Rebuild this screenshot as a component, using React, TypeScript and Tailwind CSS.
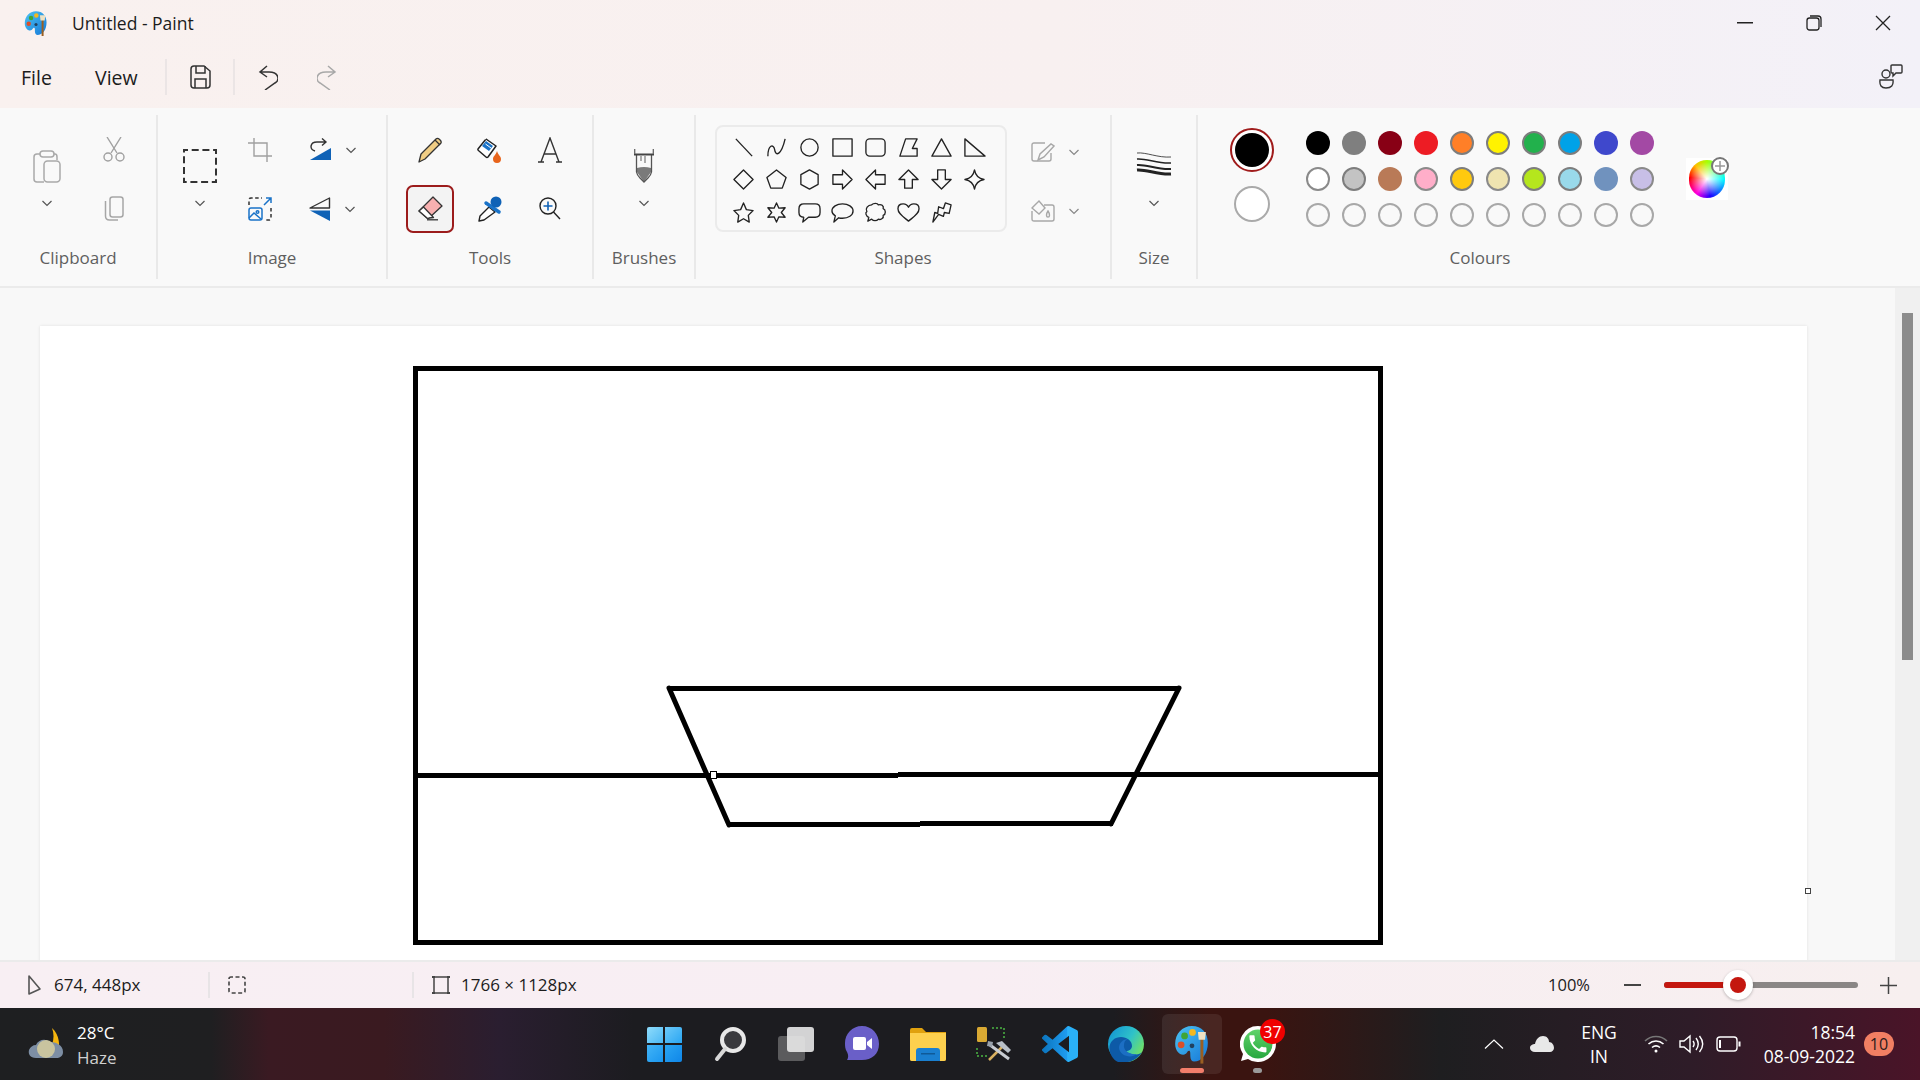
import React from "react";

const Chevron = ({ color = "#555" }: { color?: string }) => (
  <svg width="12" height="12" viewBox="0 0 12 12" fill="none" stroke={color} strokeWidth="1.200">
    <path d="M1.500 4 L6 8.500 L10.500 4" />
  </svg>
);

const PaintLogo = ({ size }: { size: number }) => (
  <svg width={size} height={size * 1.1} viewBox="0 0 36 40">
    <defs>
      <linearGradient id="palette" x1="0" y1="0" x2="1" y2="1">
        <stop offset="0" stopColor="#4cc3f2" />
        <stop offset="1" stopColor="#1578d8" />
      </linearGradient>
    </defs>
    <path d="M18 2C8 2 1 10 1 20c0 7 4 11 8 11 4 0 4-4 6-4 3 0-1 10 5 11 8 0 14-8 14-19C34 9 28 2 18 2Z" fill="url(#palette)" />
    <circle cx="7" cy="21" r="3.400" fill="#d9502b" />
    <circle cx="10.500" cy="12" r="3.400" fill="#3fa535" />
    <circle cx="18.500" cy="8.500" r="3.400" fill="#f4b81f" />
    <circle cx="18" cy="22" r="2.400" fill="#21415f" />
    <rect x="26.500" y="15" width="3" height="25" fill="#9a5f22" />
    <path d="M24 8h8l-.800 8h-6.400Z" fill="#eee2c4" />
  </svg>
);

const IconBox = ({ className, children }: { className?: string; children: React.ReactNode }) => (
  <div className={`flex items-center justify-center ${className ?? ""}`}>{children}</div>
);

const shapes: React.ReactNode[] = [
  <path d="M4 3 L21 21" />,
  <path d="M3 21C3 9 9 8 10 14c1 8 7 6 11-11" />,
  <circle cx="12" cy="12" r="9" />,
  <rect x="2" y="3" width="20" height="18" />,
  <rect x="2" y="3" width="20" height="18" rx="4" />,
  <path d="M9 3H21L16 13H21V21H3Z" />,
  <path d="M12 3 L22 21H2Z" />,
  <path d="M2 3 L23 21H2Z" />,
  <path d="M12 2 L22 12 L12 22 L2 12Z" />,
  <path d="M12 2 L22 10 L18 21H6L2 10Z" />,
  <path d="M12 2 L21 7V17L12 22 L3 17V7Z" />,
  <path d="M2 7H12V2L22 12 L12 22V17H2Z" />,
  <path d="M22 7H12V2L2 12 L12 22V17H22Z" />,
  <path d="M12 2 L22 12H16V21H8V12H2Z" />,
  <path d="M8 2H16V12H22L12 22 L2 12H8Z" />,
  <path d="M12 2C13 8 16 11 22 12 16 13 13 16 12 22 11 16 8 13 2 12 8 11 11 8 12 2Z" />,
  <path d="M12 2 L15 9 L22 10 L17 15 L18 22 L12 18.500 L6 22 L7 15 L2 10 L9 9Z" />,
  <path d="M12 2 L14.500 7.500 L21 7 L17 12 L21 17 L14.500 16.500 L12 22 L9.500 16.500 L3 17 L7 12 L3 7 L9.500 7.500Z" />,
  <path d="M6 3H18C21 3 23 5 23 8V12C23 15 21 17 18 17H11L5 22 L6 17C3 17 1 15 1 12V8C1 5 3 3 6 3Z" />,
  <path d="M12 3C18 3 23 6 23 10.500S18 18 12 18C10.500 18 9.500 18 8 17.500L3 22 L4.500 15.500C2 14 1 12.500 1 10.500 1 6 6 3 12 3Z" />,
  <path d="M8 4C10 2 14 2 15 4 18 3 21 5 20 8 23 9 23 14 20 15 21 18 17 20 15 19 13 21 10 21 8 19L4 21 5 17C2 16 1 12 3 11 1 8 4 4 8 4Z" />,
  <path d="M12 21C6 16 1 13 1 8 1 4 4 3 6.500 3 9 3 11 4.500 12 6.500 13 4.500 15 3 17.500 3 20 3 23 4 23 8 23 13 18 16 12 21Z" />,
  <path d="M9 6 L14 8 L16 2 L22 4 L20 13 L15 12 L14 16 L9 14 L3 22 L5 12 L8 13Z" />,
];

const swatches = [
  "bg-black",
  "bg-[#7f7f7f]",
  "bg-[#880015]",
  "bg-[#ed1c24]",
  "bg-[#ff7f27] border-2 border-[#7d7d7d]",
  "bg-[#fff200] border-2 border-[#7d7d7d]",
  "bg-[#22b14c] border-2 border-[#7d7d7d]",
  "bg-[#00a2e8] border-2 border-[#7d7d7d]",
  "bg-[#3f48cc]",
  "bg-[#a349a4]",
  "bg-white border-2 border-[#8a8a8a]",
  "bg-[#c3c3c3] border-2 border-[#7d7d7d]",
  "bg-[#b97a57]",
  "bg-[#ffaec9] border-2 border-[#8a8a8a]",
  "bg-[#ffc90e] border-2 border-[#7d7d7d]",
  "bg-[#efe4b0] border-2 border-[#8a8a8a]",
  "bg-[#b5e61d] border-2 border-[#7d7d7d]",
  "bg-[#99d9ea] border-2 border-[#7d7d7d]",
  "bg-[#7092be]",
  "bg-[#c8bfe7] border-2 border-[#8a8a8a]",
  ...Array(10).fill("border-2 border-[#a8a8a8]"),
];

const Group = ({
  label,
  className,
  children,
}: {
  label: string;
  className: string;
  children: React.ReactNode;
}) => (
  <div className={`flex flex-col shrink-0 border-r-2 border-[#e9e9e9] ${className}`}>
    <div className="h-[130px]">{children}</div>
    <div className="h-[26px] flex items-center justify-center text-[17px] text-[#5f5f5f]">{label}</div>
  </div>
);

const BigButton = ({ children }: { children: React.ReactNode }) => (
  <div className="row-span-2 flex flex-col items-center pt-[26px]">
    <IconBox className="h-[40px]">{children}</IconBox>
    <div className="mt-[11px] h-[12px]">
      <Chevron />
    </div>
  </div>
);

const Ribbon = () => (
  <div className="h-[180px] shrink-0 bg-[#f9f9f9] border-b-2 border-[#ebebeb] pt-[7px] flex">
    <Group label="Clipboard" className="w-[158px] h-[164px]">
      <div className="grid grid-cols-[94px_40px] grid-rows-[59px_59px] pt-[5px]">
        <BigButton>
          <svg width="28" height="33" viewBox="0 0 28 33" fill="none" stroke="#a9a9a9" strokeWidth="1.500">
            <path d="M7 4H4Q1 4 1 7V29Q1 32 4 32H11" />
            <path d="M21 4H22Q24 4 24 7V10" />
            <rect x="7" y="1" width="14" height="6" rx="3" />
            <rect x="11" y="11" width="16" height="21" rx="3.500" />
          </svg>
        </BigButton>
        <IconBox>
          <svg width="22" height="25" viewBox="0 0 22 25" fill="none" stroke="#a0a0a0" strokeWidth="1.400">
            <path d="M4 0 L14 16" />
            <path d="M18 0 L8 16" />
            <circle cx="5" cy="20" r="4" />
            <circle cx="17" cy="20" r="4" />
          </svg>
        </IconBox>
        <IconBox>
          <svg width="20" height="25" viewBox="0 0 20 25" fill="none" stroke="#a6a6a6" strokeWidth="1.500">
            <rect x="6" y="1" width="13" height="20" rx="2.500" />
            <path d="M1.500 5V20Q1.500 24 5.500 24H14" />
          </svg>
        </IconBox>
      </div>
    </Group>

    <Group label="Image" className="w-[230px] h-[164px]">
      <div className="grid grid-cols-[84px_36px_110px] grid-rows-[59px_59px] pt-[5px]">
        <BigButton>
          <svg width="34" height="34" viewBox="0 0 34 34" fill="none" stroke="#333" strokeWidth="2">
            <rect x="1" y="1" width="32" height="32" strokeDasharray="7 3.700" strokeDashoffset="3" />
          </svg>
        </BigButton>
        <IconBox>
          <svg width="24" height="25" viewBox="0 0 24 25" fill="none" stroke="#a0a0a0" strokeWidth="1.400">
            <path d="M6 1V19H24" />
            <path d="M0 6H19V25" />
          </svg>
        </IconBox>
        <div className="flex items-center pl-[31px] gap-[13px]">
          <svg width="23" height="23" viewBox="0 0 23 23" fill="none">
            <path d="M22 10V22H1Z" fill="#0f62b6" />
            <path d="M6 13C0 11 1 4 8 4H17M13 0.500 L17 4 L13 7.500" stroke="#333" strokeWidth="1.400" />
          </svg>
          <Chevron />
        </div>
        <IconBox>
          <svg width="24" height="24" viewBox="0 0 24 24" fill="none" strokeWidth="1.500">
            <path d="M1 8V3Q1 1 3 1H14" stroke="#333" strokeDasharray="3.500 2.500" />
            <path d="M23 11V21Q23 23 21 23H17" stroke="#333" strokeDasharray="3.500 2.500" />
            <path d="M18 1H23V6M23 1 L16 8" stroke="#1a73c8" />
            <rect x="1" y="11" width="13" height="12" rx="2" stroke="#1a73c8" />
            <path d="M1 21 L6 16 L13 22" stroke="#1a73c8" />
            <circle cx="9.500" cy="15" r="1.300" stroke="#1a73c8" />
          </svg>
        </IconBox>
        <div className="flex items-center pl-[31px] gap-[13px]">
          <svg width="22" height="24" viewBox="0 0 22 24" fill="none">
            <path d="M20.500 1V11H1Z" stroke="#333" strokeWidth="1.400" strokeLinejoin="round" />
            <path d="M21 13.500V24L1 13.500Z" fill="#0f62b6" />
          </svg>
          <Chevron />
        </div>
      </div>
    </Group>

    <Group label="Tools" className="w-[206px] h-[164px]">
      <div className="grid grid-cols-[60px_60px_60px] grid-rows-[59px_59px] pt-[5px] pl-[12px]">
        <IconBox>
          <svg width="25" height="26" viewBox="0 0 25 26" stroke="#333" strokeWidth="1.300" strokeLinejoin="round">
            <path d="M18 2C20 0 24 4 23 6L7 22 1 25 3 17Z" fill="#f0cd84" />
            <path d="M17 3 L22 8" fill="#fff" />
          </svg>
        </IconBox>
        <IconBox>
          <svg width="26" height="27" viewBox="0 0 26 27" strokeLinejoin="round">
            <path d="M1 13 L9 3 L19 10 L11 21Q10 22 9 21 L2 15Q0.500 14 1 13Z" fill="#fff" stroke="#222" strokeWidth="1.500" />
            <path d="M5 10 L9 5 L16 10 L12 15Z" fill="#1a73c8" />
            <path d="M8 3.500 L10 0 M8.500 8 L14 12" stroke="#fff" strokeWidth="1" />
            <path d="M20 15C21 19 24 20 24 23A4 4 0 0 1 16 23C16 20 19 19 20 15Z" fill="#e8641b" />
          </svg>
        </IconBox>
        <IconBox>
          <svg width="24" height="26" viewBox="0 0 24 26" fill="none" stroke="#333" strokeWidth="1.400">
            <path d="M3 25 L12 1 L21 25M6.500 17H17.500M0 25H6M18 25H24" />
          </svg>
        </IconBox>
        <IconBox>
          <div className="w-[48px] h-[48px] rounded-[7px] border-2 border-[#9c1c1c] bg-[#f3f3f3] flex items-center justify-center">
            <svg width="25" height="25" viewBox="0 0 25 25" stroke="#333" strokeWidth="1.300" strokeLinejoin="round">
              <path d="M15 1 L24 10 L11 22Q10 23 9 22 L1 15Z" fill="#f7b0b0" />
              <path d="M1 15 L5.500 11 L15.500 21.500 L11 22Q10 23 9 22Z" fill="#fff" />
              <path d="M9 23.800H20" fill="none" />
            </svg>
          </div>
        </IconBox>
        <IconBox>
          <svg width="24" height="26" viewBox="0 0 24 26" strokeLinejoin="round">
            <path d="M11 11 L17 16 L6 24 L1 25 L2 20Z" fill="#fff" stroke="#222" strokeWidth="1.400" />
            <path d="M8 7 L21 16" stroke="#1a73c8" strokeWidth="3.500" strokeLinecap="round" />
            <circle cx="18" cy="6" r="5.500" fill="#0f62b6" />
          </svg>
        </IconBox>
        <IconBox>
          <svg width="22" height="23" viewBox="0 0 22 23" fill="none" stroke="#222" strokeWidth="1.400">
            <circle cx="9" cy="9" r="8" />
            <path d="M14.500 15 L21 22" />
            <path d="M9 4.500V13.500M4.500 9H13.500" stroke="#0f62b6" strokeWidth="1.600" />
          </svg>
        </IconBox>
      </div>
    </Group>

    <Group label="Brushes" className="w-[102px] h-[164px]">
      <div className="grid grid-rows-[59px_59px] pt-[5px]">
        <BigButton>
          <svg width="20" height="34" viewBox="0 0 20 34" fill="none">
            <path d="M3 19Q10 17 17 19V23L10 33 L3 23Z" fill="#7a7a7a" />
            <path d="M2.500 5V23Q3 26 6 29 L10 33 L14 29Q17 26 17.500 23V5" stroke="#555" strokeWidth="1.300" />
            <path d="M0 5.500H20" stroke="#444" strokeWidth="2" />
            <path d="M0.700 0V5M19.300 0V5" stroke="#666" strokeWidth="1.300" />
            <path d="M7 7V12M11 7V14" stroke="#777" strokeWidth="1.200" />
          </svg>
        </BigButton>
      </div>
    </Group>

    <Group label="Shapes" className="w-[416px] h-[164px]">
      <div className="flex pt-[7px] pl-[19px]">
        <div className="mt-[3px] w-[292px] h-[107px] rounded-[8px] border-2 border-[#ebebeb] pl-[10px] pt-[4px] grid grid-cols-[repeat(8,33px)] auto-rows-[32.5px]">
          {shapes.map((s, i) => (
            <IconBox key={i}>
              <svg width="23" height="23" viewBox="0 0 24 24" fill="none" stroke="#222" strokeWidth="1.400" strokeLinejoin="round">
                {s}
              </svg>
            </IconBox>
          ))}
        </div>
        <div className="grid grid-rows-[59px_59px] pl-[24px]">
          <div className="flex items-center gap-[13px]">
            <svg width="24" height="20" viewBox="0 0 24 20" fill="none" stroke="#a8a8a8" strokeWidth="1.400">
              <path d="M14 1H3Q1 1 1 3V17Q1 19 3 19H18Q20 19 20 17V11" />
              <path d="M7 18 L9 12 L20 2 L23 4 L13 15Z" />
            </svg>
            <Chevron color="#888" />
          </div>
          <div className="flex items-center gap-[13px]">
            <svg width="24" height="22" viewBox="0 0 24 22" fill="none" stroke="#a8a8a8" strokeWidth="1.400">
              <path d="M8 1 L1 8 L8 14 L14 8Z" />
              <path d="M13 5H21Q23 5 23 7V19Q23 21 21 21H3Q1 21 1 19V11" />
              <path d="M17 11C15 14 15 17 17 17 19 17 19 14 17 11Z" />
            </svg>
            <Chevron color="#888" />
          </div>
        </div>
      </div>
    </Group>

    <Group label="Size" className="w-[86px] h-[164px]">
      <div className="flex flex-col items-center pt-[36px]">
        <svg width="36" height="26" viewBox="0 0 36 26" fill="none" stroke="#222">
          <path d="M1 2C10 1 22 7 35 6" strokeWidth="0.800" />
          <path d="M1 8C10 7 22 13 35 12" strokeWidth="1.500" />
          <path d="M1 14C10 13 22 19 35 18" strokeWidth="2" />
          <path d="M1 19C10 18 22 24 35 23" strokeWidth="3" />
        </svg>
        <div className="mt-[20px] h-[12px]">
          <Chevron />
        </div>
      </div>
    </Group>

    <div className="w-[564px] h-[164px] shrink-0 flex flex-col">
      <div className="h-[130px] flex">
        <div className="ml-[32px] pt-[13px] w-[44px] flex flex-col items-center">
          <div className="w-[44px] h-[44px] rounded-full border-2 border-[#a01c1c] bg-white p-[3px]">
            <div className="w-full h-full rounded-full bg-black" />
          </div>
          <div className="mt-[14px] w-[36px] h-[36px] rounded-full bg-white border-2 border-[#aaaaaa]" />
        </div>
        <div className="ml-[32px] pt-[16px] grid grid-cols-[repeat(10,24px)] gap-[12px] h-fit">
          {swatches.map((s, i) => (
            <div key={i} className={`w-[24px] h-[24px] rounded-full ${s}`} />
          ))}
        </div>
        <div className="ml-[32px] mt-[43px] relative w-[42px] h-[42px] bg-white flex items-center justify-center">
          <div className="w-[36px] h-[38px] rounded-full bg-[radial-gradient(circle,#ffffff_0%,#ffffff00_65%),conic-gradient(#a8ff00,#00ffff_90deg,#2000ff_170deg,#ff00e0_215deg,#ff0000_275deg,#ffc000_320deg,#a8ff00)]" />
          <div className="absolute -top-[1px] -right-[1px] w-[18px] h-[18px] rounded-full bg-white border-2 border-[#777] flex items-center justify-center">
            <svg width="12" height="12" viewBox="0 0 12 12" stroke="#999" strokeWidth="1.500">
              <path d="M6 1V11M1 6H11" />
            </svg>
          </div>
        </div>
      </div>
      <div className="h-[26px] flex items-center justify-center text-[17px] text-[#5f5f5f]">Colours</div>
    </div>
  </div>
);

const Header = () => (
  <div className="h-[108px] shrink-0 bg-[linear-gradient(90deg,#f9f1ef,#f8f0f0_55%,#f3f1f8)]">
    <div className="h-[46px] flex items-center pl-[24px]">
      <PaintLogo size={24} />
      <span className="ml-[24px] text-[17.500px] text-[#1c1c1c]">Untitled - Paint</span>
      <div className="ml-auto flex pr-[3px]">
        <IconBox className="w-[69px] h-[46px]">
          <svg width="16" height="2" viewBox="0 0 16 2" fill="#222">
            <rect width="16" height="1.500" />
          </svg>
        </IconBox>
        <IconBox className="w-[69px] h-[46px]">
          <svg width="16" height="16" viewBox="0 0 16 16" fill="none" stroke="#222" strokeWidth="1.300">
            <rect x="1" y="3" width="12" height="12" rx="2.500" />
            <path d="M4 1H12Q15 1 15 4V12" />
          </svg>
        </IconBox>
        <IconBox className="w-[69px] h-[46px]">
          <svg width="16" height="16" viewBox="0 0 16 16" stroke="#222" strokeWidth="1.300">
            <path d="M1 1 L15 15M15 1 L1 15" />
          </svg>
        </IconBox>
      </div>
    </div>
    <div className="h-[62px] flex items-center pl-[21px] text-[19.500px] text-[#1c1c1c]">
      <span className="w-[74px] mt-[2px]">File</span>
      <span className="w-[70px] mt-[2px]">View</span>
      <div className="w-[2px] h-[36px] bg-[#ebe5e5]" />
      <IconBox className="w-[66px] h-[40px]">
        <svg width="21" height="24" viewBox="0 0 21 24" fill="none" stroke="#333" strokeWidth="1.500">
          <path d="M4 1H14L20 6V20Q20 23 17 23H4Q1 23 1 20V4Q1 1 4 1Z" />
          <path d="M6 1V8H15V1M5 23V14H16V23" />
        </svg>
      </IconBox>
      <div className="w-[2px] h-[36px] bg-[#ebe5e5]" />
      <IconBox className="w-[66px] h-[40px]">
        <svg width="20" height="25" viewBox="0 0 20 25" fill="none" stroke="#333" strokeWidth="1.500">
          <path d="M9 1 L2 7 L9 12M2 7H11C21 7 22 15 17 18L7 25" />
        </svg>
      </IconBox>
      <IconBox className="w-[52px] h-[40px]">
        <svg width="20" height="25" viewBox="0 0 20 25" fill="none" stroke="#a8a8a8" strokeWidth="1.500">
          <path d="M11 1 L18 7 L11 12M18 7H9C-1 7-2 15 3 18L13 25" />
        </svg>
      </IconBox>
      <div className="ml-auto pr-[17px]">
        <svg width="24" height="26" viewBox="0 0 24 26" fill="none" stroke="#333" strokeWidth="1.400">
          <circle cx="7" cy="10" r="4" />
          <path d="M1 16H14Q15 24 7 24 0 24 1 16Z" />
          <path d="M13 1H22Q23 1 23 2V8Q23 9 22 9H17L14 12V9H13Q12 9 12 8V2Q12 1 13 1Z" />
        </svg>
      </div>
    </div>
  </div>
);

const Workspace = () => (
  <div className="h-[672px] shrink-0 flex bg-[#f8f8f8]">
    <div className="relative flex-1 pl-[40px] pt-[38px] overflow-hidden">
      <div className="w-[1767px] h-[640px] bg-white shadow-[0_0_3px_#0000001a]">
        <svg width="1767" height="634" viewBox="40 326 1767 634" fill="none" stroke="#000" strokeWidth="5" shapeRendering="crispEdges">
          <rect x="415" y="368" width="965" height="574" />
          <path d="M414 775H898" />
          <path d="M898 774H1381" />
          <path d="M669 688H1179" />
          <path d="M669 688 L729 825" shapeRendering="auto" strokeLinecap="round" />
          <path d="M1179 688 L1111 824" shapeRendering="auto" strokeLinecap="round" />
          <path d="M728 824H920" />
          <path d="M920 823H1113" />
          <rect x="710.500" y="771.500" width="6" height="7" fill="#fff" stroke="#000" strokeWidth="1" />
        </svg>
      </div>
      <div className="absolute left-[1805px] top-[600px] w-[6px] h-[6px] border border-[#444] bg-white" />
    </div>
    <div className="w-[25px] bg-[#f0f0f0] pt-[25px] pl-[7px]">
      <div className="w-[11px] h-[347px] bg-[#8c8c8c]" />
    </div>
  </div>
);

const StatusBar = () => (
  <div className="h-[48px] shrink-0 border-t-2 border-[#ebebeb] bg-[linear-gradient(90deg,#f8eff3,#f8eef3_50%,#f7efef)] flex items-center text-[17px] text-[#1c1c1c]">
    <div className="w-[208px] pl-[27px] flex items-center gap-[13px]">
      <svg width="14" height="20" viewBox="0 0 14 20" fill="none" stroke="#555" strokeWidth="1.600" strokeLinejoin="round">
        <path d="M2 1V19 L13 14 L2 1Z" />
      </svg>
      <span>674, 448px</span>
    </div>
    <div className="w-[2px] h-[26px] bg-[#e8e4e6]" />
    <div className="w-[202px] pl-[18px]">
      <svg width="18" height="18" viewBox="0 0 18 18" fill="none" stroke="#444" strokeWidth="1.600">
        <rect x="1" y="1" width="16" height="16" rx="2" strokeDasharray="4 2.500" strokeDashoffset="2" />
      </svg>
    </div>
    <div className="w-[2px] h-[26px] bg-[#e8e4e6]" />
    <div className="pl-[18px] flex items-center gap-[11px]">
      <svg width="18" height="20" viewBox="0 0 18 20" fill="none" stroke="#444" strokeWidth="1.500">
        <rect x="2" y="2" width="14" height="16" />
        <path d="M0 2H3M15 2H18M0 18H3M15 18H18" strokeWidth="2" />
      </svg>
      <span>1766 × 1128px</span>
    </div>
    <div className="ml-auto flex items-center pr-[23px]">
      <span className="text-[16.500px]">100%</span>
      <div className="ml-[34px] w-[17px] h-[1.500px] bg-[#444]" />
      <div className="ml-[23px] relative w-[194px] h-[6px] rounded-full bg-[#8a8685]">
        <div className="w-[74px] h-full rounded-full bg-[#c4170f]" />
        <div className="absolute left-[59px] -top-[12px] w-[30px] h-[30px] rounded-full bg-white shadow-[0_1px_3px_#00000040] flex items-center justify-center">
          <div className="w-[16px] h-[16px] rounded-full bg-[#c4170f]" />
        </div>
      </div>
      <div className="ml-[22px]">
        <svg width="17" height="17" viewBox="0 0 17 17" stroke="#444" strokeWidth="1.500">
          <path d="M8.500 0V17M0 8.500H17" />
        </svg>
      </div>
    </div>
  </div>
);

const TaskIcon = ({ children }: { children: React.ReactNode }) => (
  <IconBox className="w-[66px] h-[72px]">{children}</IconBox>
);

const Taskbar = () => (
  <div className="h-[72px] shrink-0 flex text-white bg-[linear-gradient(90deg,#1e1f21_0%,#1f1f21_11%,#3a1a22_14%,#3a1a20_20%,#2a1e30_26%,#1c1c20_33%,#1c1c20_58%,#3a1410_63%,#3a1410_66%,#1e1e20_75%,#2e1c28_88%,#4a1428_100%)]">
    <div className="w-[631px] flex pl-[28px]">
      <IconBox className="h-[72px] w-[36px]">
        <svg width="36" height="34" viewBox="0 0 36 34">
          <path d="M24 1C32 8 32 20 30 24 26 24 24 18 24 18 26 12 26 6 24 1Z" fill="#f5b50f" />
          <path d="M8 31C2 31 0 27 1 23 2 20 5 18 8 18 10 13 17 11 22 15 28 15 35 18 35 25 35 29 32 31 28 31Z" fill="#7d8ea4" />
          <circle cx="18" cy="22" r="9" fill="#c9c49f" />
        </svg>
      </IconBox>
      <div className="ml-[13px] flex flex-col h-[72px] pt-[12px]">
        <span className="text-[17px] leading-[25px]">28°C</span>
        <span className="text-[17px] leading-[25px] text-[#d0d0d0]">Haze</span>
      </div>
    </div>
    <div className="flex w-[660px]">
      <TaskIcon>
        <div className="grid grid-cols-2 gap-[2px] w-[35px] h-[35px]">
          <div className="bg-[linear-gradient(135deg,#8fdcfb,#4cb8f5)] rounded-tl-[2px]" />
          <div className="bg-[linear-gradient(135deg,#6cc9f8,#2aa6f3)] rounded-tr-[2px]" />
          <div className="bg-[linear-gradient(135deg,#42b4f6,#1a96ef)] rounded-bl-[2px]" />
          <div className="bg-[linear-gradient(135deg,#2aa6f3,#0f86e8)] rounded-br-[2px]" />
        </div>
      </TaskIcon>
      <TaskIcon>
        <svg width="32" height="36" viewBox="0 0 32 36">
          <circle cx="19" cy="14" r="11" fill="#3a3a3e" stroke="#e8e8e8" strokeWidth="4" />
          <path d="M11 23 L3 33" stroke="#d8d8d8" strokeWidth="4" strokeLinecap="round" />
        </svg>
      </TaskIcon>
      <TaskIcon>
        <div className="relative w-[36px] h-[34px]">
          <div className="absolute left-0 bottom-0 w-[27px] h-[25px] rounded-[3px] bg-[#5b5b5d]" />
          <div className="absolute right-0 top-0 w-[27px] h-[25px] rounded-[3px] bg-[#e8e8e8] opacity-90" />
        </div>
      </TaskIcon>
      <TaskIcon>
        <svg width="34" height="36" viewBox="0 0 34 36">
          <path d="M17 0C27 0 34 8 34 18 34 28 27 34 17 34H2C4 31 3 28 2 26 0 23 0 20 0 17 0 8 7 0 17 0Z" fill="#6a5fc8" />
          <rect x="8" y="11" width="13" height="13" rx="2" fill="#fff" />
          <path d="M22 16 L27 12V23 L22 19Z" fill="#fff" />
        </svg>
      </TaskIcon>
      <TaskIcon>
        <svg width="36" height="34" viewBox="0 0 36 34">
          <path d="M0 3Q0 1 2 1H12L16 5H36V32Q36 34 34 34H2Q0 34 0 32Z" fill="#e0a10e" />
          <path d="M0 6H36V32Q36 34 34 34H2Q0 34 0 32Z" fill="#fdd04e" />
          <path d="M6 34V24Q6 21 9 21H27Q30 21 30 24V34Z" fill="#1a7fd0" />
          <rect x="11" y="26" width="14" height="1.500" fill="#0f5a98" />
        </svg>
      </TaskIcon>
      <TaskIcon>
        <svg width="36" height="36" viewBox="0 0 36 36" fill="none">
          <rect x="1" y="1" width="10" height="15" rx="1.500" fill="#d9a933" />
          <path d="M16 2H28V14M1 22V30H12" stroke="#3f8f3a" strokeWidth="2" strokeDasharray="2 2" />
          <path d="M13 34 L27 20" stroke="#d8b060" strokeWidth="2.500" />
          <path d="M33 33 L14 19" stroke="#c8ccd2" strokeWidth="3" />
          <path d="M20 17 L26 15 L35 24 L32 27Z" fill="#b9c0c8" />
          <path d="M12 15 L17 16 L16 21 L11 20Z" fill="#9aa2ac" />
        </svg>
      </TaskIcon>
      <TaskIcon>
        <svg width="36" height="36" viewBox="0 0 24 24">
          <defs>
            <linearGradient id="vsc" x1="0" y1="0" x2="1" y2="0">
              <stop offset="0" stopColor="#0b74bd" />
              <stop offset="0.700" stopColor="#1f9cf0" />
              <stop offset="0.710" stopColor="#2ab0f7" />
            </linearGradient>
          </defs>
          <path d="M23.150 2.587L18.210.21a1.494 1.494 0 0 0-1.705.29l-9.460 8.630-4.120-3.128a.999.999 0 0 0-1.276.057L.327 7.261A1 1 0 0 0 .326 8.740L3.899 12 .326 15.260a1 1 0 0 0 .001 1.479L1.650 17.940a.999.999 0 0 0 1.276.057l4.120-3.128 9.460 8.630a1.492 1.492 0 0 0 1.704.29l4.942-2.377A1.500 1.500 0 0 0 24 20.060V3.939a1.500 1.500 0 0 0-.850-1.352zm-5.146 14.861L10.826 12l7.178-5.448v10.896z" fill="url(#vsc)" />
        </svg>
      </TaskIcon>
      <TaskIcon>
        <svg width="36" height="36" viewBox="0 0 36 36">
          <defs>
            <linearGradient id="edge" x1="0" y1="0" x2="1" y2="0.600">
              <stop offset="0" stopColor="#0f8fd6" />
              <stop offset="0.600" stopColor="#2fc2c8" />
              <stop offset="1" stopColor="#6fe068" />
            </linearGradient>
          </defs>
          <circle cx="18" cy="18" r="18" fill="url(#edge)" />
          <path d="M10 36C2 32-2 20 5 14 12 8 24 12 24 20 24 23 21 25 18 25 21 29 30 30 34 26 30 33 22 38 10 36Z" fill="#0d5aa7" />
          <path d="M16 19C15 24 21 29 29 28 23 33 12 30 11 22 11 17 15 13 20 13 17 14 16 16 16 19Z" fill="#1c6fc4" />
        </svg>
      </TaskIcon>
      <IconBox className="w-[66px] h-[72px]">
        <div className="relative w-[60px] h-[60px] rounded-[6px] bg-[#ffffff14] flex items-center justify-center">
          <PaintLogo size={36} />
          <div className="absolute left-[18px] bottom-[1px] w-[24px] h-[5px] rounded-full bg-[#f27d6b]" />
        </div>
      </IconBox>
      <div className="relative">
        <TaskIcon>
          <svg width="36" height="36" viewBox="0 0 36 36">
            <defs>
              <linearGradient id="wa" x1="0" y1="0" x2="0" y2="1">
                <stop offset="0" stopColor="#5fd36a" />
                <stop offset="1" stopColor="#27a83f" />
              </linearGradient>
            </defs>
            <path d="M18 0A18 18 0 1 1 8 33L1 35 3 28A18 18 0 0 1 18 0Z" fill="#fff" />
            <circle cx="18" cy="18" r="14.500" fill="url(#wa)" />
            <g transform="translate(6.500 6.500) scale(0.950)">
              <path d="M6.620 10.790c1.440 2.830 3.760 5.140 6.590 6.590l2.200-2.200c.27-.27.67-.36 1.020-.24 1.120.37 2.330.57 3.570.57.55 0 1 .45 1 1V20c0 .55-.45 1-1 1-9.390 0-17-7.610-17-17 0-.55.45-1 1-1h3.500c.55 0 1 .45 1 1 0 1.250.2 2.450.57 3.570.11.35.03.74-.25 1.020l-2.200 2.200z" fill="#fff" />
            </g>
          </svg>
        </TaskIcon>
        <div className="absolute left-[35px] top-[11px] w-[25px] h-[25px] rounded-full bg-[#f00000] flex items-center justify-center text-[16px] text-white">
          37
        </div>
        <div className="absolute left-[28px] top-[60px] w-[9px] h-[5px] rounded-full bg-[#9a9a9a]" />
      </div>
    </div>
    <div className="ml-auto flex items-center pr-[26px] text-[17.500px]">
      <IconBox className="w-[48px]">
        <svg width="20" height="10" viewBox="0 0 20 10" fill="none" stroke="#fff" strokeWidth="1.200">
          <path d="M1 9.500 L10 1 L19 9.500" />
        </svg>
      </IconBox>
      <IconBox className="w-[48px]">
        <svg width="24" height="16" viewBox="0 0 24 16" fill="#e8e8e8">
          <path d="M5 16C2 16 0 14 0 12 0 9 3 8 5 8 6 3 9 0 13 0 17 0 19 3 19 6 22 6 24 9 24 12 24 14 22 16 20 16Z" />
        </svg>
      </IconBox>
      <div className="w-[66px] flex flex-col items-center leading-[24px]">
        <span>ENG</span>
        <span>IN</span>
      </div>
      <IconBox className="ml-[6px] w-[36px]">
        <svg width="24" height="18" viewBox="0 0 24 18" fill="none" stroke="#fff" strokeWidth="1.600">
          <path d="M1 6C7 0 17 0 23 6" stroke="#777" />
          <path d="M4.500 9C9 5 15 5 19.500 9" />
          <path d="M8 12.500C10.500 10.500 13.500 10.500 16 12.500" />
          <circle cx="12" cy="16" r="1.500" fill="#fff" stroke="none" />
        </svg>
      </IconBox>
      <IconBox className="w-[36px]">
        <svg width="26" height="20" viewBox="0 0 26 20" fill="none" stroke="#fff" strokeWidth="1.400">
          <path d="M1 7H5L11 2V18L5 13H1Z" />
          <path d="M14 7C15.500 9 15.500 11 14 13M17 4C20 8 20 12 17 16M20.500 2C24.500 7 24.500 13 20.500 18" />
        </svg>
      </IconBox>
      <IconBox className="w-[36px]">
        <svg width="25" height="16" viewBox="0 0 25 16" fill="none" stroke="#fff" strokeWidth="1.400">
          <rect x="1" y="1" width="20" height="14" rx="3" />
          <rect x="3" y="4" width="2" height="8" fill="#fff" stroke="none" />
          <path d="M23.500 5.500V10.500" strokeWidth="2" />
        </svg>
      </IconBox>
      <div className="w-[109px] flex flex-col items-end leading-[24px]">
        <span>18:54</span>
        <span>08-09-2022</span>
      </div>
      <div className="ml-[9px] w-[30px] h-[24px] rounded-full bg-[#f17f63] flex items-center justify-center text-[16px] text-[#2a1a1a]">
        10
      </div>
    </div>
  </div>
);

export default function App() {
  return (
    <div className="w-[1920px] h-[1080px] flex flex-col overflow-hidden font-['Open_Sans',sans-serif]">
      <Header />
      <Ribbon />
      <Workspace />
      <StatusBar />
      <Taskbar />
    </div>
  );
}
